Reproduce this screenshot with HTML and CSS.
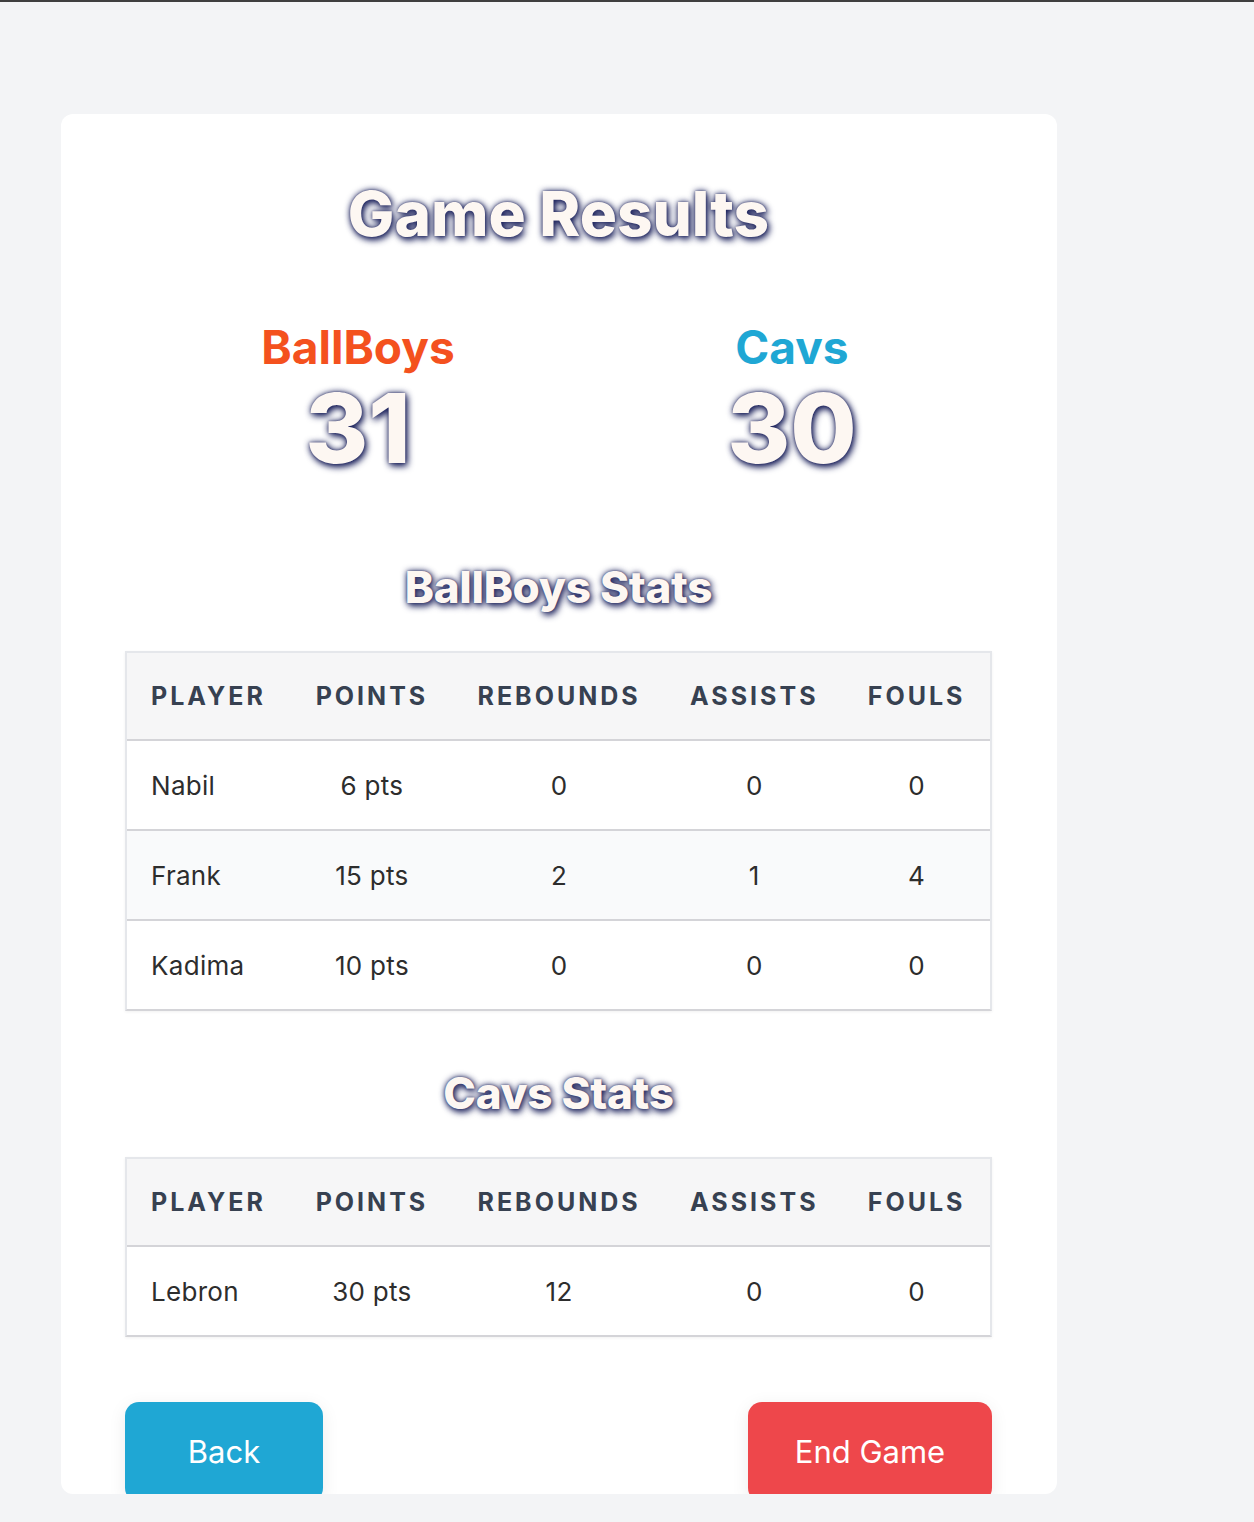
FILE: index.html
```html
<!DOCTYPE html>
<html lang="en">
<head>
<meta charset="utf-8">
<title>Game Results</title>
<link rel="stylesheet" href="styles.css">
</head>
<body>
<div class="topline"></div>
<main class="page">
  <section class="card">
    <h1 class="title">Game Results</h1>
    <div class="scores">
      <div class="team">
        <div class="team-name home">BallBoys</div>
        <div class="score">31</div>
      </div>
      <div class="team">
        <div class="team-name away">Cavs</div>
        <div class="score">30</div>
      </div>
    </div>

    <h2 class="stats-title">BallBoys Stats</h2>
    <table class="stats">
      <thead>
        <tr><th class="left">Player</th><th>Points</th><th>Rebounds</th><th>Assists</th><th>Fouls</th></tr>
      </thead>
      <tbody>
        <tr><td class="left">Nabil</td><td>6 pts</td><td>0</td><td>0</td><td>0</td></tr>
        <tr class="alt"><td class="left">Frank</td><td>15 pts</td><td>2</td><td>1</td><td>4</td></tr>
        <tr><td class="left">Kadima</td><td>10 pts</td><td>0</td><td>0</td><td>0</td></tr>
      </tbody>
    </table>

    <h2 class="stats-title second">Cavs Stats</h2>
    <table class="stats">
      <thead>
        <tr><th class="left">Player</th><th>Points</th><th>Rebounds</th><th>Assists</th><th>Fouls</th></tr>
      </thead>
      <tbody>
        <tr><td class="left">Lebron</td><td>30 pts</td><td>12</td><td>0</td><td>0</td></tr>
      </tbody>
    </table>

    <div class="actions">
      <button class="btn btn-back">Back</button>
      <button class="btn btn-end">End Game</button>
    </div>
  </section>
</main>
</body>
</html>
```

FILE: styles.css
```css
* { box-sizing: border-box; }
html, body { margin: 0; padding: 0; }
body {
  background: #f3f4f6;
  font-family: Inter, "Noto Sans", "Liberation Sans", sans-serif;
  color: #2d2d2d;
  height: 1522px;
  overflow: hidden;
}
.topline {
  height: 2px;
  background: #3f3f3f;
}
.page {
  padding: 112px 0 0 61px;
}
.card {
  width: 996px;
  height: 1380px;
  background: #ffffff;
  border-radius: 12px;
  padding: 62px 65px 0 64px;
  overflow: hidden;
}
.title,
.score,
.stats-title {
  color: #fdf7f2;
  text-shadow: 2px 3px 7px #1c225c, 0 0 6px rgba(28, 34, 92, 0.85), 0 0 2px rgba(28, 34, 92, 0.6);
}
.title {
  margin: 0;
  text-align: center;
  font-size: 62px;
  line-height: 76px;
  font-weight: 800;
}
.scores {
  display: grid;
  grid-template-columns: 434px 434px;
  margin: 69px 0 0 16px;
}
.team {
  display: flex;
  flex-direction: column;
  align-items: center;
}
.team-name {
  font-size: 46px;
  line-height: 52px;
  font-weight: 700;
}
.home { color: #f4511e; }
.away { color: #1fa7d4; }
.score {
  margin-top: 3px;
  font-size: 96px;
  line-height: 104px;
  font-weight: 800;
}
.stats-title {
  margin: 82px 0 0;
  text-align: center;
  font-size: 44px;
  line-height: 50px;
  font-weight: 800;
  letter-spacing: -0.3px;
}
.stats-title.second { margin-top: 57px; }
.stats {
  width: 100%;
  margin-top: 39px;
  border-collapse: separate;
  border-spacing: 0;
  border: 2px solid #e5e7eb;
  border-bottom-color: #d4d4d8;
  box-shadow: 0 1px 3px rgba(0, 0, 0, 0.06);
}
.stats th, .stats td {
  padding: 31px 24px;
  line-height: 26px;
  text-align: center;
  border-bottom: 2px solid #d4d4d8;
  white-space: nowrap;
}
.stats th {
  padding: 30px 24px;
  background: #f6f6f7;
  font-size: 25px;
  font-weight: 700;
  color: #374151;
  text-transform: uppercase;
  letter-spacing: 3px;
}
.stats td {
  padding-top: 32px;
  padding-bottom: 30px;
  font-size: 26px;
  letter-spacing: 0.3px;
  font-weight: 400;
  color: #2d2d2d;
}
.stats tbody tr:last-child td { border-bottom: 0; }
.stats tr.alt td { background: #f9fafb; }
.stats .left { text-align: left; }
.actions {
  display: flex;
  justify-content: space-between;
  margin-top: 65px;
}
.btn {
  height: 100px;
  border: 0;
  border-radius: 14px;
  padding: 0 0 2px;
  font-family: Inter, "Noto Sans", "Liberation Sans", sans-serif;
  font-size: 31px;
  font-weight: 400;
  color: #ffffff;
  box-shadow: 0 4px 18px rgba(0, 0, 0, 0.08);
}
.btn-back { width: 198px; background: #1fa7d4; }
.btn-end { width: 244px; background: #ee474b; }
```
